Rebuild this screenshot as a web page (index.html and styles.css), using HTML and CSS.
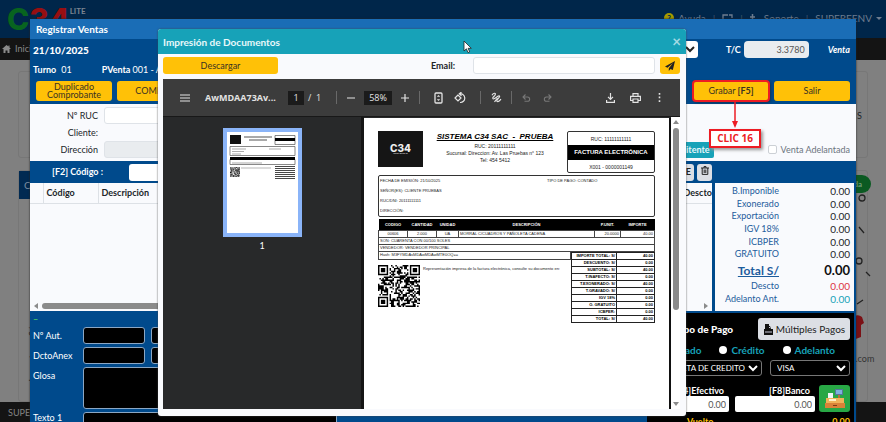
FILE: index.html
```
<!DOCTYPE html>
<html lang="es">
<head>
<meta charset="utf-8">
<title>Registrar Ventas</title>
<link rel="stylesheet" href="styles.css">
</head>
<body>
<div class="page">
  <header class="topbar">
    <div class="brand"><span class="brand-c">C</span><span class="brand-34">34</span><small>LITE</small></div>
    <nav class="topnav">
      <a href="#"><span class="help">?</span> Ayuda</a><i>|</i>
      <a href="#" aria-label="Pantalla"><svg width="11" height="9" viewBox="0 0 11 9"><path d="M6 1H1v7h9V5M7 1h3v3" fill="none" stroke="currentColor" stroke-width="1.3"/></svg></a><i>|</i>
      <a href="#"><svg width="5" height="9" viewBox="0 0 5 9"><path d="M2.500 0v9M0 3h5" stroke="currentColor" stroke-width="1.500"/></svg><span class="support">Soporte</span></a><i>|</i>
      <a href="#">SUPEREENV <span class="caret"></span></a>
    </nav>
  </header>
  <nav class="menubar"><svg width="9" height="8" viewBox="0 0 18 16"><path d="M9 0L0 8h3v8h4v-5h4v5h4V8h3l-3-3V1h-2v2z" fill="currentColor"/></svg><a href="#">Inicio</a></nav>
  <main class="backdrop">
    <section class="bcard bcard-top"><span>S</span></section>
    <section class="bcard bcard-main">
      <h2>C</h2>
      <span class="axis">Importe en S/</span>
      <div class="side">
        <span class="pill">Ayuda</span>
        <svg width="36" height="156" viewBox="0 0 36 156"><g fill="none" stroke="#222" stroke-width="1.300"><circle cx="23" cy="5" r="3"/><path d="M20 34l5 6M27 79l4 4M18 111l6-4"/><circle cx="20" cy="68" r="3"/></g><path d="M12 128q5-9 11-4l2 6-3 2v12l-8 3z" fill="#7b1015"/></svg>
        <span class="site">34.com</span>
      </div>
    </section>
  </main>
  <footer class="footer">SUPEREENV</footer>
</div>

<section class="sales" aria-label="Registrar Ventas">
  <header class="sales-head">Registrar Ventas</header>
  <div class="sales-top">
    <div class="row-date">
      <b class="date">21/10/2025</b>
      <select class="doc-type" aria-label="Documento"><option></option></select>
      <label for="tc">T/C</label><input id="tc" class="tc" value="3.3780" readonly>
      <em>Venta</em>
    </div>
    <div class="row-shift"><b>Turno</b><span>01</span><b class="pv">PVenta</b><span>001 - ALMACEN</span></div>
    <div class="row-actions">
      <button class="btn">Duplicado<br>Comprobante</button>
      <button class="btn">COMBOS</button>
      <div class="save-wrap">
        <button class="btn save">Grabar <b>[F5]</b></button>
        <div class="callout"><svg width="10" height="27" viewBox="0 0 10 27"><path d="M5 0v20" stroke="#ed1c24" stroke-width="1.500"/><path d="M2 19h6l-3 7z" fill="#ed1c24"/></svg><strong>CLIC 16</strong></div>
      </div>
      <button class="btn">Salir</button>
    </div>
  </div>
  <div class="client">
    <div class="crow"><label for="ruc">Nº RUC</label><input id="ruc" class="short"></div>
    <div class="crow"><span class="lab">Cliente:</span></div>
    <div class="crow"><label for="dir">Dirección</label><input id="dir" class="off" readonly><button class="remit">Remitente</button><label class="adv"><input type="checkbox"> Venta Adelantada</label></div>
  </div>
  <div class="code-bar">
    <label for="code">[F2] Código :</label><input id="code">
    <button class="mini">DE</button>
    <button class="mini trash" aria-label="Borrar"><svg width="8" height="9" viewBox="0 0 8 9"><path d="M0 2h8M3 2V.6h2V2M1.200 2v6.400h5.600V2M3.200 3.500v3.500M4.800 3.500v3.500" fill="none" stroke="#222"/></svg></button>
  </div>
  <div class="middle">
    <div class="items">
      <table><thead><tr><th class="c0"></th><th class="c1">Código</th><th>Descripción</th><th class="c3">Descto</th></tr></thead></table>
      <div class="hscroll"><i class="tri left"></i><span></span><i class="tri right"></i></div>
    </div>
    <dl class="totals">
      <dt>B.Imponible</dt><dd>0.00</dd>
      <dt>Exonerado</dt><dd>0.00</dd>
      <dt>Exportación</dt><dd>0.00</dd>
      <dt>IGV 18%</dt><dd>0.00</dd>
      <dt>ICBPER</dt><dd>0.00</dd>
      <dt>GRATUITO</dt><dd>0.00</dd>
      <dt class="big"><u>Total S/</u></dt><dd class="big due">0.00</dd>
      <dt>Descto</dt><dd class="red">0.00</dd>
      <dt>Adelanto Ant.</dt><dd class="cyan">0.00</dd>
    </dl>
  </div>
  <div class="bottom">
    <div class="extra">
      <div class="dash">–</div>
      <label for="aut">Nº Aut.</label><div class="pair"><input id="aut"><input aria-label="Nº Aut. 2"></div>
      <label for="anex">DctoAnex</label><div class="pair"><input id="anex"><input aria-label="DctoAnex 2"></div>
      <label for="glosa">Glosa</label><textarea id="glosa"></textarea>
      <label for="tx1" class="last">Texto 1</label><input id="tx1">
    </div>
    <div class="pay">
      <div class="pay-head"><b>Tipo de Pago</b><button class="multi"><svg width="11" height="11" viewBox="0 0 11 11"><path d="M2 0h4v2h1l1 3h2v6H1V5h1z" fill="#111"/><path d="M2 8h7M6 3.500h1" stroke="#ccd"/></svg>Múltiples Pagos</button></div>
      <div class="radios"><label><input type="radio" name="p" class="r">Contado</label><label><input type="radio" name="p" class="r">Crédito</label><label><input type="radio" name="p" class="r">Adelanto</label></div>
      <div class="sels"><select aria-label="Medio"><option>TARJETA DE CREDITO</option></select><select aria-label="Tarjeta"><option>VISA</option></select></div>
      <div class="cash">
        <div class="amt"><label for="ef">[F4]Efectivo</label><input id="ef" value="0.00"></div>
        <div class="amt"><label for="ba">[F8]Banco</label><input id="ba" value="0.00"></div>
        <button class="till" aria-label="Caja"><svg width="22" height="22" viewBox="0 0 22 22"><path d="M11 1h8v6h-8z" fill="#54769b"/><path d="M12 2h6v4h-6z" fill="#7fb0dc"/><path d="M14 7h2v4h-2z" fill="#b9703b"/><path d="M4 5h5v6H4z" fill="#eef4f6"/><path d="M2 10h18v5H2z" fill="#f0b35a"/><path d="M5 11h7v2H5z" fill="#fff1c9"/><path d="M1 15h20v5H1z" fill="#d98238"/><path d="M9 17h4v1H9z" fill="#7b3c16"/></svg></button>
      </div>
      <div class="change"><span>Vuelto</span><span>0.00</span></div>
    </div>
  </div>
</section>

<section class="print" role="dialog" aria-label="Impresión de Documentos">
  <header class="print-head"><b>Impresión de Documentos</b>
    <svg class="cursor" width="9" height="14" viewBox="0 0 9 14"><path d="M1 1v10l2.400-2.200L5 12.600l1.700-.7L5.100 8.300h3.200z" fill="#fff" stroke="#222" stroke-width=".8"/></svg>
    <button class="close" aria-label="Cerrar">×</button></header>
  <div class="print-bar">
    <button class="btn dl">Descargar</button>
    <label for="mail">Email:</label><input id="mail">
    <button class="btn send" aria-label="Enviar"><svg width="10" height="10" viewBox="0 0 10 10"><path d="M10 0L0 5.500l2.500 1.200L8 2 3.800 7.300V10l1.700-2 2.300 1z" fill="#222"/></svg></button>
  </div>
  <div class="viewer">
    <div class="tools">
      <svg class="t-menu" width="10" height="8" viewBox="0 0 10 8"><path d="M0 1h10M0 4h10M0 7h10" stroke="currentColor" stroke-width="1.200"/></svg>
      <b class="fname">AwMDAA73Av...</b>
      <span class="chip pg">1</span><span class="of">/&nbsp; 1</span>
      <i class="sep"></i>
      <svg width="8" height="8" viewBox="0 0 8 8"><path d="M0 4h8" stroke="currentColor" stroke-width="1.200"/></svg>
      <span class="chip zoom">58%</span>
      <svg width="8" height="8" viewBox="0 0 8 8"><path d="M0 4h8M4 0v8" stroke="currentColor" stroke-width="1.200"/></svg>
      <i class="sep"></i>
      <svg class="t-fit" width="9" height="12" viewBox="0 0 9 12"><rect x="1" y="1" width="7" height="10" rx="1" fill="none" stroke="currentColor" stroke-width="1.300"/><path d="M2.800 4.700L4.500 3l1.700 1.700zM2.800 7.300L4.500 9l1.700-1.700z" fill="currentColor"/></svg>
      <svg class="t-rot" width="12" height="12" viewBox="0 0 12 12"><path d="M4 3L1 6l3 3 3-3zM5.500 1.800a4.400 4.400 0 1 1 .5 8.700M7.500 0L5.300 1.800l2.200 2" fill="none" stroke="currentColor" stroke-width="1.200"/></svg>
      <i class="sep"></i>
      <svg class="t-pen" width="11" height="11" viewBox="0 0 11 11"><path d="M1 3.200C2.200.8 4.800.6 4.300 2.600 3.800 4.400 1.300 4.800 1.800 6.300c.6 1.500 3-.6 4.600-1.800C8.500 3 9.300 4.300 8 5.700 6.800 7 5 8.200 6 9.300c1.200 1 3.200-.9 3.900-2.300" fill="none" stroke="currentColor" stroke-width="1.200"/><path d="M3.500 9.800L6.500 6" stroke="currentColor" stroke-width="1.200"/></svg>
      <i class="sep"></i>
      <svg class="dim t-undo" width="9" height="8" viewBox="0 0 9 8"><path d="M3.500.5L1 3l2.500 2.500M1 3h4.500a2 2 0 0 1 0 4.300H2.500" fill="none" stroke="currentColor" stroke-width="1.100"/></svg>
      <svg class="dim t-redo" width="9" height="8" viewBox="0 0 9 8"><path d="M5.500.5L8 3 5.500 5.500M8 3H3.500a2 2 0 0 0 0 4.300h3" fill="none" stroke="currentColor" stroke-width="1.100"/></svg>
      <svg class="t-down" width="9" height="10" viewBox="0 0 9 10"><path d="M4.500 0v6M2 3.800l2.500 2.500L7 3.800M.6 7v2.300h7.800V7" fill="none" stroke="currentColor" stroke-width="1.200"/></svg>
      <svg class="t-print" width="11" height="10" viewBox="0 0 11 10"><path d="M3 3V.6h5V3M2.500 7.500H.6V3.300h9.800v4.200H8.500M3 6h5v3.400H3z" fill="none" stroke="currentColor" stroke-width="1.200"/></svg>
      <svg class="t-more" width="3" height="9" viewBox="0 0 3 9"><path d="M.7 0h1.600v1.700H.7zM.7 3.600h1.600v1.700H.7zM.7 7.200h1.600v1.700H.7z" fill="currentColor"/></svg>
    </div>
    <div class="doc">
      <aside class="thumbs">
        <div class="thumb"><svg width="71" height="101" viewBox="0 0 71 101"><path d="M3 3h11v9H3z" fill="#111"/><path d="M17 5h28M22 8h18" stroke="#555" stroke-width="1.200"/><path d="M48 3.500h20v9H48zM3 14.500h65v9H3zM3 27.500h65v5H3z" fill="none" stroke="#555" stroke-width=".7"/><path d="M48 6h20v3H48zM3 25h65v3H3z" fill="#000"/><path d="M5 17h14M5 19.500h12M5 22h9M42 17h12M5 31h30" stroke="#888" stroke-width=".7"/><path d="M14 36h30" stroke="#999" stroke-width=".7"/><path d="M48 34.500h20M48 36.500h20M48 38.500h20M48 40.500h20M48 42.500h20M48 44.500h20M48 46.500h20" stroke="#333" stroke-width=".9"/><g class="qr" data-x="3" data-y="35" data-size="10"></g></svg></div>
        <span>1</span>
      </aside>
      <article class="sheet">
        <div class="inv-head">
          <div class="logo"><b>C34</b><small>CONTABILIDAD</small></div>
          <div class="company"><h1>SISTEMA C34 SAC&nbsp; -&nbsp; PRUEBA</h1><p>RUC: 20111111111</p><p>Sucursal: Direccion: Av. Las Pruebas n° 123</p><p>Tel: 454 5412</p></div>
          <div class="docno"><p>RUC: 11111111111</p><b>FACTURA ELECTRÓNICA</b><p>X001 - 0000001149</p></div>
        </div>
        <div class="info"><p>FECHA DE EMISIÓN: 21/10/2025</p><p>TIPO DE PAGO: CONTADO</p><p>SEÑOR(ES): CLIENTE PRUEBAS</p><p></p><p>RUC/DNI: 20111111111</p><p></p><p>DIRECCIÓN:</p></div>
        <table class="lines">
          <thead><tr><th class="w1">CODIGO</th><th class="w1">CANTIDAD</th><th class="w2">UNIDAD</th><th>DESCRIPCIÓN</th><th class="w3">P.UNIT.</th><th class="w4">IMPORTE</th></tr></thead>
          <tbody><tr><td class="mid">00606</td><td class="mid">2.000</td><td class="mid">UA</td><td>MORRAL C/CUADROS Y PAÑOLETA CADENA</td><td class="num">20.0000</td><td class="num">40.00</td></tr>
          <tr><td colspan="6">SON: CUARENTA CON 00/100 SOLES</td></tr>
          <tr><td colspan="6">VENDEDOR: VENDEDOR PRINCIPAL</td></tr></tbody>
        </table>
        <div class="inv-foot">
          <div class="foot-left">
            <div class="hash">Hash: M3FYMDAsMDAwMDAwMTE0OQ==</div>
            <div class="qr-row"><svg width="42" height="42" viewBox="0 0 42 42"><g class="qr" data-x="0" data-y="0" data-size="42"></g></svg><p>Representación impresa de la factura electrónica, consulte su documento en:</p></div>
          </div>
          <table class="sums">
            <tr><th>IMPORTE TOTAL: S/</th><td>40.00</td></tr><tr><th>DESCUENTO: S/</th><td>0.00</td></tr><tr><th>SUBTOTAL: S/</th><td>40.00</td></tr><tr><th>T.INAFECTO: S/</th><td>0.00</td></tr><tr><th>T.EXONERADO: S/</th><td>40.00</td></tr><tr><th>T.GRAVADO: S/</th><td>0.00</td></tr><tr><th>IGV 18%</th><td>0.00</td></tr><tr><th>O. GRATUITO</th><td>0.00</td></tr><tr><th>ICBPER:</th><td>0.00</td></tr><tr><th>TOTAL: S/</th><td>40.00</td></tr>
          </table>
        </div>
      </article>
      <div class="vscroll"><i class="tri up"></i><span></span><i class="tri down"></i></div>
    </div>
  </div>
</section>
<script src="qr.js"></script>
</body>
</html>
```
FILE: qr.js
```
// Draws a 29-module code into every <g class="qr">.
document.querySelectorAll('g.qr').forEach(function (g) {
  var n = 29, size = +g.dataset.size, x0 = +g.dataset.x, y0 = +g.dataset.y, u = size / n, d = '', seed = 7;
  function finder(x, y) {
    if (x > 7 || y > 7) return null;
    if (x === 7 || y === 7) return false;
    return x === 0 || y === 0 || x === 6 || y === 6 || (x > 1 && x < 5 && y > 1 && y < 5);
  }
  for (var y = 0; y < n; y++) for (var x = 0; x < n; x++) {
    seed = (seed * 1103515245 + 12345) % 2147483648;
    var f = finder(x, y);
    if (f === null) f = finder(n - 1 - x, y);
    if (f === null) f = finder(x, n - 1 - y);
    if (f === null) f = seed / 2147483648 > 0.45;
    if (f) d += 'M' + (x0 + x * u) + ' ' + (y0 + y * u) + 'h' + u + 'v' + u + 'h-' + u + 'z';
  }
  var p = document.createElementNS('http://www.w3.org/2000/svg', 'path');
  p.setAttribute('d', d);
  g.appendChild(p);
});
```
FILE: styles.css
```
* { box-sizing: border-box; }
body { margin: 0; font: 9px/12px Lato, "Liberation Sans", sans-serif; color: #212529; height: 100vh; overflow: hidden; position: relative; }
button, input, select, textarea { font: inherit; margin: 0; padding: 0; min-width: 0; color: inherit; }
p, h1, h2, dl, dd { margin: 0; }
a { color: inherit; text-decoration: none; }

/* Dimmed page */
.page { height: 100%; display: flex; flex-direction: column; background: #808080; }
.topbar { flex: none; height: 38px; background: #00264a; display: flex; justify-content: space-between; padding: 0 4px 0 7px; }
.brand { display: flex; font: 800 30px/38px Inter, sans-serif; }
.brand-c { color: #08641f; }
.brand-34 { color: #970f12; }
.brand small { font: bold 8px/22px Lato, sans-serif; color: #7b8490; }
.topnav { display: flex; gap: 7px; align-items: center; height: 36px; color: #6d7c8f; font-size: 10px; }
.topnav a { display: flex; align-items: center; gap: 4px; }
.topnav i { font-style: normal; color: #44566c; }
.support { margin-left: 5px; }
.help { width: 10px; height: 10px; border-radius: 50%; background: #a49a00; color: #00264a; font: bold 8px/10px Lato, sans-serif; text-align: center; }
.caret { border: 3px solid transparent; border-top-color: currentColor; border-bottom: 0; }
.menubar { flex: none; height: 22px; background: #141414; color: #8a8a8a; display: flex; align-items: center; gap: 4px; padding-left: 2px; }
.backdrop { flex: 1; padding: 11px 18px 0; display: flex; flex-direction: column; gap: 12px; min-height: 0; }
.bcard { border: 1px solid #777; border-radius: 3px; }
.bcard-top { height: 87px; text-align: right; padding: 38px 5px 0; }
.bcard-main { flex: 1; display: flex; min-height: 0; position: relative; justify-content: flex-end; }
.bcard-main h2 { position: absolute; inset: 0 auto auto 0; width: 60px; height: 28px; background: #012a52; color: #7d8da0; font: 10px/28px Lato, sans-serif; padding-left: 5px; }
.axis { position: absolute; left: 8px; top: 156px; writing-mode: vertical-rl; transform: rotate(180deg); color: #222; }
.side { width: 28px; display: flex; flex-direction: column; }
.pill { width: 70px; margin: 4px 0 0 -38px; background: #0b5a22; color: #6f9a7a; border-radius: 9px; font: bold 8px/18px Lato, sans-serif; text-align: right; padding-right: 9px; }
.site { margin: 4px 0 0 6px; color: #333; white-space: nowrap; }
.footer { flex: none; height: 20px; background: #141414; color: #858585; line-height: 22px; padding-left: 8px; }

/* Buttons */
.btn { border: 0; border-radius: 3px; background: #ffc107; color: #3a3222; line-height: 8px; }

/* Sales window */
.sales { position: absolute; inset: 19px 30px 0; background: #004a8c; overflow: hidden; display: flex; flex-direction: column; box-shadow: 0 0 2px #222; }
.sales > * { flex: none; }
.sales-head { height: 20px; background: #1a6db6; color: #fff; font: bold 10px/20px Lato, sans-serif; padding-left: 6px; }
.sales-top { color: #fff; height: 65px; padding: 2px 6px 0 3px; }
.row-date { display: flex; align-items: center; height: 17px; font-weight: bold; }
.date { font-size: 10px; flex: 1; }
.doc-type { width: 60px; height: 17px; border: 0; border-radius: 3px; background: #fff; color: #222; margin-right: 28px; }
.tc { width: 65px; height: 17px; border: 0; border-radius: 4px; background: #e9ecef; color: #555; font-weight: normal; text-align: right; padding-right: 4px; margin: 0 19px 0 3px; }
.row-shift { display: flex; gap: 5px; height: 23px; line-height: 24px; }
.pv { margin-left: 25px; margin-right: -3px; }
.row-actions { display: flex; gap: 5px; padding-left: 3px; height: 20px; }
.row-actions > .btn { width: 76px; }
.save-wrap { margin-left: auto; position: relative; width: 76px; display: flex; z-index: 5; }
.save { width: 100%; outline: 2px solid #ed1c24; outline-offset: -1px; box-shadow: 1px 1px 3px #222; }
.callout { position: absolute; top: 21px; left: 16px; width: 52px; display: flex; flex-direction: column; align-items: center; }
.callout strong { width: 100%; border: 2px solid #ed1c24; background: #fff; color: #ed1c24; font: bold 10px/15px "Open Sans", sans-serif; text-align: center; box-shadow: 2px 2px 3px #999; }
.client { background: #f9fafd; height: 57px; padding-top: 3px; }
.crow { display: flex; align-items: center; height: 17px; gap: 6px; }
.crow > label:first-child, .lab { width: 68px; text-align: right; }
.crow > input { flex: 1; height: 17px; border: 1px solid #dfe3e8; border-radius: 3px; background: #fff; }
.crow > .short { margin-right: 206px; }
.crow > .off { background: #e9ecef; }
.remit { width: 66px; height: 16px; border: 0; border-radius: 2px; background: #17a2b8; color: #e5f7fa; font-weight: bold; text-align: right; padding-right: 4px; }
.adv { display: flex; align-items: center; gap: 4px; color: #6c757d; padding-right: 6px; margin-left: 48px; }
.adv input { appearance: none; width: 9px; height: 9px; border: 1px solid #ccd0d5; border-radius: 2px; background: #fff; }
.code-bar { height: 22px; display: flex; align-items: center; gap: 3px; padding-right: 144px; color: #fff; font-weight: bold; }
.code-bar label { width: 73px; text-align: right; margin-right: 23px; }
.code-bar input { flex: 1; height: 17px; border: 0; border-radius: 3px; background: #fff; }
.mini { width: 22px; height: 17px; border: 0; border-radius: 3px; background: #dcdfe5; color: #222; text-align: right; padding-right: 3px; }
.trash { width: 15px; text-align: center; padding: 0; }
.middle { display: flex; height: 128px; padding-right: 2px; gap: 3px; }
.items { flex: 1; background: #f9fafd; display: flex; flex-direction: column; justify-content: space-between; min-width: 0; }
.items table { width: 100%; border-collapse: collapse; table-layout: fixed; }
.items th { height: 20px; padding: 0 0 0 3px; text-align: left; border-right: 1px solid #dde1e6; border-bottom: 1px solid #dde1e6; white-space: nowrap; overflow: hidden; }
.c0 { width: 13px; }
.c1 { width: 55px; }
.items .c3 { width: 32px; border-right: 0; }
.hscroll { height: 10px; display: flex; align-items: center; justify-content: space-between; padding: 0 4px; }
.hscroll span { flex: 1; margin: 0 24px 0 4px; height: 6px; border-radius: 3px; background: #8b8b8b; }
.tri { border: 3px solid transparent; width: 0; height: 0; }
.left { border-right: 4px solid #8b8b8b; border-left: 0; }
.right { border-left: 4px solid #8b8b8b; border-right: 0; }
.up { border-bottom: 4px solid #8b8b8b; border-top: 0; }
.down { border-top: 4px solid #8b8b8b; border-bottom: 0; }
.totals { width: 139px; background: #f9fafd; padding: 2px 4px 6px 0; display: grid; grid-template-columns: 64px 1fr; grid-auto-rows: min-content; align-content: space-between; line-height: 12px; text-align: right; }
.totals dt { color: #1d5c9c; white-space: nowrap; }
.totals dd { font-size: 10px; }
.totals .big { font-size: 12px; font-weight: bold; line-height: 19px; }
.totals .due { font-size: 13px; color: #111; }
.totals .red { color: #dc3545; }
.totals .cyan { color: #17a2b8; }
.bottom { flex: 1 0 auto; display: flex; justify-content: space-between; padding: 2px 2px 0 3px; }
.extra { width: 304px; color: #fff; display: grid; grid-template-columns: 50px 1fr; align-content: start; row-gap: 3px; line-height: 17px; }
.dash { grid-column: 1 / 3; color: #3fc06a; font-weight: bold; line-height: 11px; }
.extra input, .extra textarea { background: #000; border: 1px solid #8ba7c4; border-radius: 3px; height: 17px; width: 100%; display: block; resize: none; }
.extra textarea { height: 42px; }
.last { line-height: 12px; }
.pair { display: grid; grid-template-columns: 62px 62px; gap: 6px; }
.pay { width: 207px; background: #000; color: #fff; padding: 5px 4px 0 10px; font-weight: bold; }
.pay-head { display: flex; align-items: center; justify-content: space-between; padding-left: 18px; font-size: 10px; }
.multi { width: 92px; height: 22px; border: 0; border-radius: 3px; background: #dcdfe5; color: #222; font-weight: normal; display: flex; align-items: center; justify-content: center; gap: 2px; }
.radios { display: flex; justify-content: flex-end; gap: 18px; color: #17a2b8; height: 20px; padding-right: 15px; font-size: 10px; }
.radios label { display: flex; align-items: center; gap: 4px; }
.r { appearance: none; width: 8px; height: 8px; border-radius: 50%; background: #fff; }
.sels { display: grid; grid-template-columns: 1fr 80px; gap: 8px; }
.sels select { height: 16px; background: #000; border: 1px solid #777; border-radius: 3px; font: 8px/12px Lato, sans-serif; color: #fff; padding-left: 2px; }
.cash { display: grid; grid-template-columns: 1fr 80px 31px; column-gap: 4px; padding-top: 9px; align-items: end; }
.amt { display: flex; flex-direction: column; text-align: right; }
.amt:first-child { padding-right: 2px; }
.amt label { padding-right: 5px; line-height: 11px; }
.amt input { width: 100%; height: 16px; border: 0; border-radius: 2px; background: #fff; color: #555; font-weight: normal; text-align: right; padding-right: 3px; }
.till { height: 27px; border: 0; border-radius: 3px; background: #28a745; display: flex; align-items: center; justify-content: center; }
.change { display: flex; justify-content: space-between; color: #ffc107; padding: 4px 0 0 30px; line-height: 12px; }

/* Print dialog */
.print { position: absolute; inset: 29px 200px 6px 158px; background: #f9fafd; border-radius: 3px; overflow: hidden; display: flex; flex-direction: column; box-shadow: 0 0 2px #444; z-index: 2; }
.print-head { height: 25px; flex: none; background: #17a2b8; color: #e9f8fa; display: flex; align-items: center; justify-content: space-between; padding: 0 5px; position: relative; font-size: 10px; }
.cursor { position: absolute; left: 305px; top: 11px; }
.close { border: 0; background: none; color: #a4dae3; font: bold 15px/15px Lato, sans-serif; }
.print-bar { flex: none; height: 25px; padding: 3px 6px 0 5px; display: flex; align-items: flex-start; gap: 5px; }
.print-bar .btn { height: 17px; }
.dl { width: 115px; margin-right: 148px; }
.print-bar label { font-weight: bold; line-height: 17px; flex: 1; }
.print-bar input { width: 182px; height: 17px; border: 1px solid #dfe3e8; border-radius: 3px; background: #fff; }
.send { width: 20px; display: flex; align-items: center; justify-content: center; }
.viewer { flex: 1; margin: 0 6px 7px 5px; display: flex; flex-direction: column; min-height: 0; }
.tools { flex: none; height: 37px; background: #3c3c3c; color: #e3e3e3; display: flex; align-items: center; padding: 0 19px 0 17px; font: 9px/12px "Open Sans", sans-serif; }
.tools svg { flex: none; }
.fname { width: 69px; margin: 0 14px 0 15px; white-space: nowrap; }
.chip { background: #1b1b1b; text-align: center; line-height: 14px; }
.pg { width: 16px; margin-right: 4px; }
.of { width: 18px; }
.sep { width: 1px; height: 13px; background: #696969; margin: 0 10px; }
.zoom { width: 28px; margin: 0 9px; }
.t-fit { margin-left: 4px; }
.t-rot { margin: 0 4px 0 11px; }
.t-pen { margin-right: -1px; }
.t-undo { margin-right: 12px; }
.t-down { margin-left: auto; }
.t-print { margin: 0 17px 0 15px; }
.dim { color: #777; }
.doc { flex: 1; display: flex; min-height: 0; background: #28292a; border-top: 1px solid #181818; }
.thumbs { flex: 1; display: flex; flex-direction: column; align-items: center; gap: 4px; padding-top: 11px; color: #fff; border-right: 3px solid #151515; line-height: 10px; }
.thumb { border: 4px solid #8ab4f8; background: #fff; }
.thumb svg { display: block; }
.sheet { width: 307px; margin-top: 1px; background: #fff; border-right: 2px solid #111; padding: 13px 14px 0 14px; font: 5px/7px "Liberation Sans", sans-serif; color: #222; }
.inv-head { display: flex; }
.logo { width: 45px; height: 36px; background: #151515; color: #eee; display: flex; flex-direction: column; align-items: center; justify-content: center; }
.logo b { font: 800 10px/8px Inter, sans-serif; }
.logo small { font-size: 2px; line-height: 3px; }
.company { flex: 1; text-align: center; white-space: nowrap; }
.company h1 { font: italic bold 8px/12px "Liberation Sans", sans-serif; text-decoration: underline; color: #000; }
.docno { width: 88px; height: 42px; border: 1px solid #333; border-radius: 2px; text-align: center; display: flex; flex-direction: column; justify-content: space-between; }
.docno p { line-height: 12px; padding-top: 1px; }
.docno b { background: #000; color: #fff; line-height: 15px; font-size: 6px; white-space: nowrap; }
.info { border: 1px solid #333; border-radius: 2px; margin-top: 2px; height: 42px; padding: 1px 1px 0; display: grid; grid-template-columns: 167px 1fr; grid-auto-rows: 10px; font-size: 4px; line-height: 7px; }
.lines, .sums { border-collapse: collapse; table-layout: fixed; width: 100%; }
.lines { margin-top: 2px; }
.lines th { background: #000; color: #fff; font-size: 4px; height: 11px; padding: 0; }
.lines td { border: 1px solid #444; font-size: 4px; line-height: 6px; padding: 0 1px; height: 7px; }
.lines .mid { text-align: center; }
.lines .num, .sums { text-align: right; }
.w1 { width: 29px; }
.w2 { width: 22px; }
.w3 { width: 26px; }
.w4 { width: 34px; }
.inv-foot { display: flex; }
.foot-left { flex: 1; }
.hash { border: 1px solid #444; border-top: 0; height: 8px; font-size: 4px; padding-left: 1px; line-height: 6px; }
.qr-row { display: flex; gap: 3px; padding-top: 5px; white-space: nowrap; font-size: 4px; }
.qr-row svg { flex: none; }
.sums { width: 84px; font-weight: bold; color: #000; }
.sums th, .sums td { border: 1px solid #222; padding: 0 1px; height: 7px; font-size: 4px; line-height: 6px; text-align: right; white-space: nowrap; }
.sums th { width: 45px; }
.vscroll { width: 9px; background: #fff; display: flex; flex-direction: column; align-items: center; padding: 3px 0; }
.vscroll span { width: 6px; height: 182px; margin: 4px 0 auto; border-radius: 3px; background: #8b8b8b; }
```
